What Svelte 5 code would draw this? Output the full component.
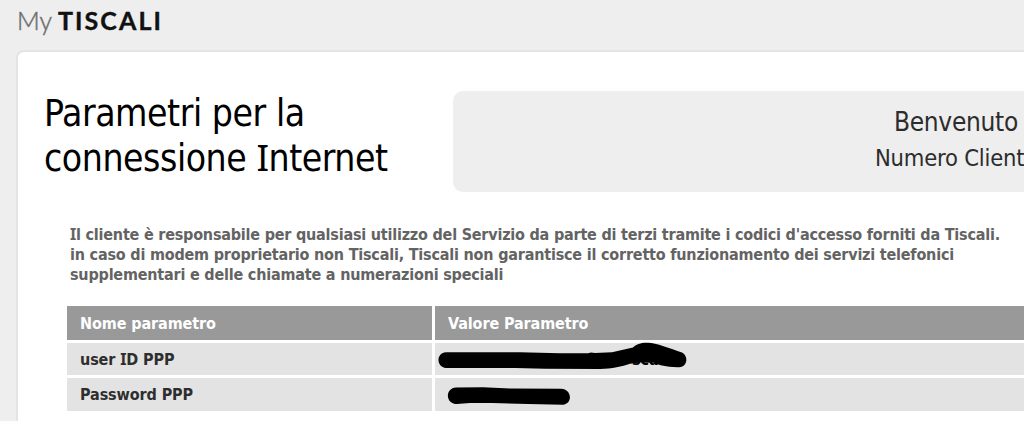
<script>
  const headers = ['Nome parametro', 'Valore Parametro'];
  const notice = [
    { text: "Il cliente è responsabile per qualsiasi utilizzo del Servizio da parte di terzi tramite i codici d'accesso forniti da Tiscali.", spacing: -0.21 },
    { text: 'in caso di modem proprietario non Tiscali, Tiscali non garantisce il corretto funzionamento dei servizi telefonici', spacing: -0.2 },
    { text: 'supplementari e delle chiamate a numerazioni speciali', spacing: -0.2 },
  ];
</script>

<!-- capital I takes the serifed form -->
{#snippet label(text)}{#each text.split('I') as part, i}{#if i > 0}<span class="cap-i">I</span>{/if}{part}{/each}{/snippet}

<div class="page">
  <header class="brand"><span class="my">My</span><span class="name">TISCALI</span></header>

  <main class="card">
    <div class="top">
      <h1>
        <span>Parametri per la</span>
        <span>{@render label('connessione Internet')}</span>
      </h1>
      <section class="welcome">
        <p class="hello">Benvenuto</p>
        <p class="client">Numero Client</p>
      </section>
    </div>

    <div class="notice">
      {#each notice as line}
        <p style="letter-spacing: {line.spacing}px">{@render label(line.text)}</p>
      {/each}
    </div>

    <div class="table">
      <div class="row head">
        {#each headers as text}
          <div class="cell"><span>{text}</span></div>
        {/each}
      </div>
      <div class="row first">
        <div class="cell"><span>{@render label('user ID PPP')}</span></div>
        <div class="cell value">
          <svg class="ink" width="260" height="32" viewBox="435 343 260 32">
            <text x="632" y="364.6">sca</text>
            <path d="M446 352.3 L520 352.3 L560 353.2 L588 353.2 L591 352.4 L595 353 L612 352.2 L633 347.6 C636 344 642 342.4 648 342.8 C656 343 670 348.5 682 352.5 C688 355 688.5 366.5 679 367.2 C666 367.4 660 365.2 654 362.8 L640 362.4 L630 363.8 C622 366.5 612 368.8 600 368.9 L545 368.8 L515 368 L446 368 C436 367 436 353 446 352.3Z" />
          </svg>
        </div>
      </div>
      <div class="row">
        <div class="cell"><span>Password PPP</span></div>
        <div class="cell value">
          <svg class="ink" width="260" height="33" viewBox="435 378 260 33">
            <path d="M456 387.5 L483 387.2 L510 388.5 L561 388.7 C572 389 573 403.5 563 404.7 L528 404 L492 403 L470 403 L457 404 C445 404 445 388 456 387.5Z" />
          </svg>
        </div>
      </div>
    </div>
  </main>
</div>

<style>
  :global(body) {
    margin: 0;
    overflow: hidden;
    background: #eee;
  }
  .page {
    width: 1024px;
    height: 421px;
    overflow: hidden;
    background: #eee;
    font-family: 'DejaVu Sans Condensed', 'DejaVu Sans', sans-serif;
    font-stretch: condensed;
  }
  p, h1 { margin: 0; font-weight: 400; white-space: nowrap; }
  .cap-i { font-family: 'Noto Sans', sans-serif; line-height: 1; }
  .brand {
    display: flex;
    align-items: baseline;
    gap: 6px;
    box-sizing: border-box;
    height: 50px;
    padding: 5px 0 0 17px;
    font-family: Lato, sans-serif;
    font-size: 25px;
    line-height: 30px;
  }
  .my { font-weight: 300; color: #666; -webkit-text-stroke: 0.5px #777; }
  .name {
    font-weight: 700;
    color: #111;
    letter-spacing: 2.1px;
    -webkit-text-stroke: 0.4px #111;
  }
  .card {
    box-sizing: border-box;
    width: 1060px;
    height: 390px;
    margin-left: 16px;
    padding: 39px 0 0 26px;
    border: 2px solid #e4e4e4;
    border-radius: 8px;
    background: #fff;
  }
  .top { display: flex; height: 101px; }
  h1 {
    flex: none;
    width: 409px;
    font-size: 37px;
    line-height: 45px;
    letter-spacing: -0.45px;
    color: #000;
  }
  h1 > span { display: block; }
  .welcome {
    flex: none;
    box-sizing: border-box;
    width: 600px;
    padding-top: 12px;
    border-radius: 10px;
    background: #eee;
    color: #2c2c2c;
  }
  .hello { padding-left: 441px; font-size: 26px; line-height: 38px; letter-spacing: -0.3px; }
  .client { padding-left: 422px; font-size: 23.5px; line-height: 34px; letter-spacing: -0.2px; }
  .notice {
    padding: 33px 0 0 26px;
    font-size: 16px;
    line-height: 20px;
    color: #636363;
  }
  .notice p, .cell { font-weight: 700; }
  .table {
    display: flex;
    flex-direction: column;
    gap: 3px;
    margin: 21px 0 0 23px;
    font-size: 16px;
    color: #2e2e2e;
  }
  .row {
    display: grid;
    grid-template-columns: 365px 600px;
    gap: 3px;
    height: 33px;
  }
  .first { height: 32px; }
  .head { height: 34px; color: #fff; }
  .cell {
    display: flex;
    align-items: center;
    padding-left: 13px;
    background: #e3e3e3;
    letter-spacing: -0.1px;
  }
  .head .cell { background: #999; }
  .row .value { padding-left: 0; }
  .ink { display: block; overflow: visible; fill: #000; }
  .ink text { font-size: 16px; font-weight: 700; }
</style>
